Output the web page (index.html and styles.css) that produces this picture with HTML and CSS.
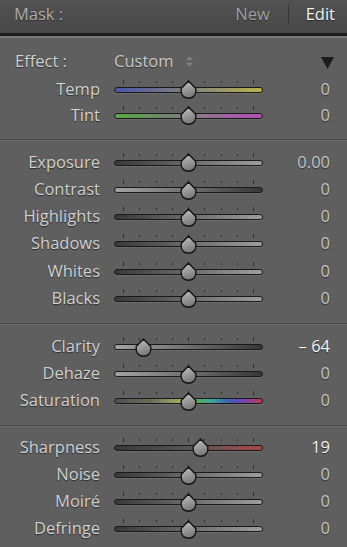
FILE: index.html
```html
<!DOCTYPE html>
<html>
<head>
<meta charset="utf-8">
<title>Mask</title>
<link rel="stylesheet" href="styles.css">
</head>
<body>
<svg class="defs" width="0" height="0" aria-hidden="true">
  <defs>
    <linearGradient id="thumbFill" x1="0" y1="0" x2="0.3" y2="1">
      <stop offset="0" stop-color="#c4c4c4"/>
      <stop offset="1" stop-color="#7a7a7a"/>
    </linearGradient>
    <symbol id="thumb" viewBox="0 0 17 19">
      <path d="M8.5 0.9 L15.8 8.4 V11.6 C15.8 15.6 12.6 18.2 8.5 18.2 C4.4 18.2 1.2 15.6 1.2 11.6 V8.4 Z" fill="url(#thumbFill)" stroke="#141414" stroke-width="1.4" stroke-linejoin="round"/>
    </symbol>
  </defs>
</svg>

<header class="header">
  <span class="mask">Mask :</span>
  <nav class="modes">
    <span class="new">New</span>
    <span class="sep"></span>
    <span class="edit">Edit</span>
  </nav>
</header>

<section class="section s1">
  <div class="effect-row">
    <span class="effect-label">Effect :</span>
    <span class="custom">Custom</span>
    <svg class="updown" width="9" height="11" viewBox="0 0 9 11"><polygon points="4.5,0.5 8,4.2 1,4.2"/><polygon points="1,6.8 8,6.8 4.5,10.5"/></svg>
    <svg class="collapse" width="13" height="12" viewBox="0 0 13 12"><polygon points="0,0 13,0 6.5,12"/></svg>
  </div>
  <div class="row short">
    <span class="label">Temp</span>
    <div class="slider"><div class="ticks"><i class="major"></i><i></i><i></i><i></i><i class="major"></i><i></i><i></i><i></i><i class="major"></i></div><div class="track t-temp"></div><svg class="thumb" style="left:66px"><use href="#thumb"/></svg></div>
    <span class="value">0</span>
  </div>
  <div class="row short">
    <span class="label">Tint</span>
    <div class="slider"><div class="ticks"><i class="major"></i><i></i><i></i><i></i><i class="major"></i><i></i><i></i><i></i><i class="major"></i></div><div class="track t-tint"></div><svg class="thumb" style="left:66px"><use href="#thumb"/></svg></div>
    <span class="value">0</span>
  </div>
</section>

<section class="section s2">
  <div class="row">
    <span class="label">Exposure</span>
    <div class="slider"><div class="ticks"><i class="major"></i><i></i><i></i><i></i><i class="major"></i><i></i><i></i><i></i><i class="major"></i></div><div class="track t-d2l"></div><svg class="thumb" style="left:66px"><use href="#thumb"/></svg></div>
    <span class="value">0.00</span>
  </div>
  <div class="row">
    <span class="label">Contrast</span>
    <div class="slider"><div class="ticks"><i class="major"></i><i></i><i></i><i></i><i class="major"></i><i></i><i></i><i></i><i class="major"></i></div><div class="track t-l2d"></div><svg class="thumb" style="left:66px"><use href="#thumb"/></svg></div>
    <span class="value">0</span>
  </div>
  <div class="row">
    <span class="label">Highlights</span>
    <div class="slider"><div class="ticks"><i class="major"></i><i></i><i></i><i></i><i class="major"></i><i></i><i></i><i></i><i class="major"></i></div><div class="track t-d2l"></div><svg class="thumb" style="left:66px"><use href="#thumb"/></svg></div>
    <span class="value">0</span>
  </div>
  <div class="row">
    <span class="label">Shadows</span>
    <div class="slider"><div class="ticks"><i class="major"></i><i></i><i></i><i></i><i class="major"></i><i></i><i></i><i></i><i class="major"></i></div><div class="track t-d2l"></div><svg class="thumb" style="left:66px"><use href="#thumb"/></svg></div>
    <span class="value">0</span>
  </div>
  <div class="row">
    <span class="label">Whites</span>
    <div class="slider"><div class="ticks"><i class="major"></i><i></i><i></i><i></i><i class="major"></i><i></i><i></i><i></i><i class="major"></i></div><div class="track t-d2l"></div><svg class="thumb" style="left:66px"><use href="#thumb"/></svg></div>
    <span class="value">0</span>
  </div>
  <div class="row">
    <span class="label">Blacks</span>
    <div class="slider"><div class="ticks"><i class="major"></i><i></i><i></i><i></i><i class="major"></i><i></i><i></i><i></i><i class="major"></i></div><div class="track t-d2l"></div><svg class="thumb" style="left:66px"><use href="#thumb"/></svg></div>
    <span class="value">0</span>
  </div>
</section>

<section class="section s3">
  <div class="row">
    <span class="label">Clarity</span>
    <div class="slider"><div class="ticks"><i class="major"></i><i></i><i></i><i></i><i class="major"></i><i></i><i></i><i></i><i class="major"></i></div><div class="track t-l2d"></div><svg class="thumb" style="left:21px"><use href="#thumb"/></svg></div>
    <span class="value active">– 64</span>
  </div>
  <div class="row">
    <span class="label">Dehaze</span>
    <div class="slider"><div class="ticks"><i class="major"></i><i></i><i></i><i></i><i class="major"></i><i></i><i></i><i></i><i class="major"></i></div><div class="track t-l2d"></div><svg class="thumb" style="left:66px"><use href="#thumb"/></svg></div>
    <span class="value">0</span>
  </div>
  <div class="row">
    <span class="label">Saturation</span>
    <div class="slider"><div class="ticks"><i class="major"></i><i></i><i></i><i></i><i class="major"></i><i></i><i></i><i></i><i class="major"></i></div><div class="track t-sat"></div><svg class="thumb" style="left:66px"><use href="#thumb"/></svg></div>
    <span class="value">0</span>
  </div>
</section>

<section class="section s4">
  <div class="row">
    <span class="label">Sharpness</span>
    <div class="slider"><div class="ticks"><i class="major"></i><i></i><i></i><i></i><i class="major"></i><i></i><i></i><i></i><i class="major"></i></div><div class="track t-sharp"></div><svg class="thumb" style="left:78px"><use href="#thumb"/></svg></div>
    <span class="value active">19</span>
  </div>
  <div class="row">
    <span class="label">Noise</span>
    <div class="slider"><div class="ticks"><i class="major"></i><i></i><i></i><i></i><i class="major"></i><i></i><i></i><i></i><i class="major"></i></div><div class="track t-d2l"></div><svg class="thumb" style="left:66px"><use href="#thumb"/></svg></div>
    <span class="value">0</span>
  </div>
  <div class="row">
    <span class="label">Moiré</span>
    <div class="slider"><div class="ticks"><i class="major"></i><i></i><i></i><i></i><i class="major"></i><i></i><i></i><i></i><i class="major"></i></div><div class="track t-d2l"></div><svg class="thumb" style="left:66px"><use href="#thumb"/></svg></div>
    <span class="value">0</span>
  </div>
  <div class="row">
    <span class="label">Defringe</span>
    <div class="slider"><div class="ticks"><i class="major"></i><i></i><i></i><i></i><i class="major"></i><i></i><i></i><i></i><i class="major"></i></div><div class="track t-d2l"></div><svg class="thumb" style="left:66px"><use href="#thumb"/></svg></div>
    <span class="value">0</span>
  </div>
</section>
</body>
</html>
```

FILE: styles.css
```css
* { box-sizing: border-box; }

html, body {
  margin: 0;
  padding: 0;
}

body {
  width: 347px;
  height: 547px;
  overflow: hidden;
  background: #5f5f5f;
  font-family: "Open Sans", "Noto Sans", sans-serif;
  font-size: 16.5px;
  font-weight: 500;
  line-height: 22px;
  color: #d0d0d0;
}

.defs {
  position: absolute;
  width: 0;
  height: 0;
  overflow: hidden;
}

/* Header */
.header {
  height: 36px;
  display: flex;
  align-items: flex-start;
  justify-content: space-between;
  padding: 2.5px 12px 0 14px;
  background: linear-gradient(#525252, #484848);
  border-bottom: 3px solid #1c1c1c;
}

.mask {
  color: #acacac;
  text-shadow: 0 1px 1px rgba(0, 0, 0, 0.45);
}

.modes {
  display: flex;
  align-items: flex-start;
}

.new {
  color: #a0a0a0;
  text-shadow: 0 1px 1px rgba(0, 0, 0, 0.45);
}

.sep {
  width: 1px;
  height: 18px;
  margin: 2.5px 17px 0 18px;
  background: #343434;
}

.edit {
  color: #f4f4f4;
  text-shadow: 0 1px 1px rgba(0, 0, 0, 0.5);
}

/* Sections */
.section {
  border-top: 1px solid #6c6c6c;
  border-bottom: 1px solid #474747;
}

.s1 {
  border-top: 2px solid #7c7c7c;
  padding: 10px 0 11px;
}

.s2 {
  padding: 8px 0 11px;
}

.s3 {
  padding: 8px 0 10.9px;
}

.s4 {
  padding: 7px 0 0;
  border-bottom: none;
}

/* Effect row */
.effect-row {
  height: 27.5px;
  display: flex;
  align-items: flex-start;
  padding-top: 2px;
}

.effect-label {
  width: 100px;
  padding-left: 15px;
  text-shadow: 0 1px 1px rgba(0, 0, 0, 0.5);
}

.custom {
  margin-left: 14px;
  color: #c8c8c8;
  text-shadow: 0 1px 1px rgba(0, 0, 0, 0.45);
}

.updown {
  margin: 6px 0 0 12px;
  fill: #828282;
}

.collapse {
  margin: 6.7px 13px 0 auto;
  fill: #1c1c1c;
}

/* Slider rows */
.row {
  height: 27.2px;
  display: flex;
  align-items: flex-start;
}

.row.short {
  height: 26.2px;
}

.s3 .row {
  height: 27px;
}

.label {
  width: 100px;
  flex: none;
  padding-top: 2px;
  text-align: right;
  color: #d0d0d0;
  text-shadow: 0 1px 1px rgba(0, 0, 0, 0.55);
}

.value {
  flex: 1;
  padding: 2px 17px 0 0;
  text-align: right;
  color: #c4c4c4;
  text-shadow: 0 1px 1px rgba(0, 0, 0, 0.5);
}

.value.active {
  color: #f2f2f2;
}

.slider {
  position: relative;
  flex: none;
  width: 149px;
  height: 27px;
  margin-left: 14px;
  padding-top: 4px;
}

.ticks {
  display: flex;
  justify-content: space-between;
  align-items: center;
  height: 4px;
  padding: 0 9px;
}

.ticks i {
  display: block;
  width: 1px;
  height: 2px;
  background: #2c2c2c;
}

.ticks i.major {
  height: 4px;
}

.track {
  margin-top: 3px;
  height: 6px;
  border: 1px solid #1a1a1a;
  border-radius: 3px;
  box-shadow: 0 1px 0 rgba(255, 255, 255, 0.08);
}

.t-temp { background: linear-gradient(90deg, #4b56a8, #6c6f8c 30%, #86867a 55%, #b8b34a); }
.t-tint { background: linear-gradient(90deg, #55a944, #6f8a66 30%, #8a7a8a 55%, #b24cb9); }
.t-d2l { background: linear-gradient(90deg, #393939, #6a6a6a 50%, #9d9d9d); }
.t-l2d { background: linear-gradient(90deg, #a4a4a4, #6e6e6e 50%, #363636); }
.t-sat { background: linear-gradient(90deg, #4e4e4c, #6c6e58 25%, #a4ae62 45%, #52aa58 56%, #3aa5a2 66%, #3f5cbb 78%, #7b42b2 88%, #c63c4e); }
.t-sharp { background: linear-gradient(90deg, #383838, #555555 50%, #a84848); }

.thumb {
  position: absolute;
  top: 4.5px;
  width: 17px;
  height: 19px;
}
```
